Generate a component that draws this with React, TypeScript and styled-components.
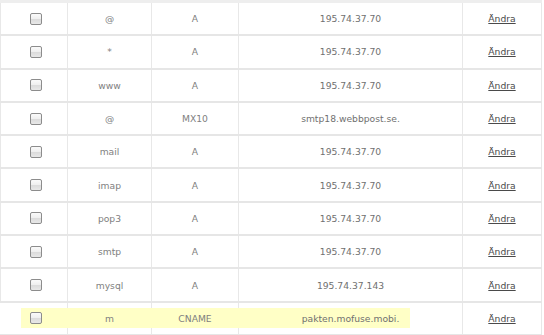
import { FC } from "react";
import styled, { createGlobalStyle } from "styled-components";

const GlobalStyle = createGlobalStyle`
  html, body {
    margin: 0;
    padding: 0;
    background: #ffffff;
  }
`;

const Table = styled.div`
  width: 542px;
  border-top: 3px solid #eeeeee;
  font-family: "DejaVu Sans", Verdana, sans-serif;
  font-size: 9.2px;
  color: #707070;
`;

const Row = styled.div`
  position: relative;
  display: grid;
  grid-template-columns: 68px 84px 87px 224px 79px;
  height: 33.3px;
  box-sizing: border-box;
  border-bottom: 2px solid #e6e6e6;
`;

const Cell = styled.div`
  display: flex;
  align-items: center;
  justify-content: center;
  border-right: 1px solid #e8e8e8;
  box-sizing: border-box;

  &:first-child {
    border-left: 1px solid #e8e8e8;
  }
`;

const Label = styled.span<{ $dim?: boolean }>`
  position: relative;
  z-index: 2;
  color: ${(p) => (p.$dim ? "#808080" : "#707070")};
`;

const Highlight = styled.div`
  position: absolute;
  z-index: 1;
  left: 21px;
  top: 5px;
  width: 389px;
  height: 20px;
  background: #ffffc6;
`;

const Check = styled.span`
  position: relative;
  z-index: 2;
  width: 12px;
  height: 12px;
  margin-left: 4px;
  box-sizing: border-box;
  border: 1px solid #8c8c8c;
  border-radius: 2px;
  background: linear-gradient(
    to bottom,
    #fafafa 0%,
    #f0f0f0 45%,
    #dcdcdc 55%,
    #e8e8e8 100%
  );
`;

const EditLink = styled.a`
  position: relative;
  z-index: 2;
  color: #4a4a4a;
  text-decoration: underline;
  cursor: pointer;
`;

interface Record {
  name: string;
  type: string;
  value: string;
  marked?: boolean;
}

const records: Record[] = [
  { name: "@", type: "A", value: "195.74.37.70" },
  { name: "*", type: "A", value: "195.74.37.70" },
  { name: "www", type: "A", value: "195.74.37.70" },
  { name: "@", type: "MX10", value: "smtp18.webbpost.se." },
  { name: "mail", type: "A", value: "195.74.37.70" },
  { name: "imap", type: "A", value: "195.74.37.70" },
  { name: "pop3", type: "A", value: "195.74.37.70" },
  { name: "smtp", type: "A", value: "195.74.37.70" },
  { name: "mysql", type: "A", value: "195.74.37.143" },
  { name: "m", type: "CNAME", value: "pakten.mofuse.mobi.", marked: true },
];

const App: FC = () => {
  return (
    <>
      <GlobalStyle />
      <Table>
        {records.map((r, i) => (
          <Row key={i}>
            {r.marked && <Highlight />}
            <Cell>
              <Check />
            </Cell>
            <Cell>
              <Label $dim>{r.name}</Label>
            </Cell>
            <Cell>
              <Label $dim>{r.type}</Label>
            </Cell>
            <Cell>
              <Label>{r.value}</Label>
            </Cell>
            <Cell>
              <EditLink>Ändra</EditLink>
            </Cell>
          </Row>
        ))}
      </Table>
    </>
  );
};

export default App;
